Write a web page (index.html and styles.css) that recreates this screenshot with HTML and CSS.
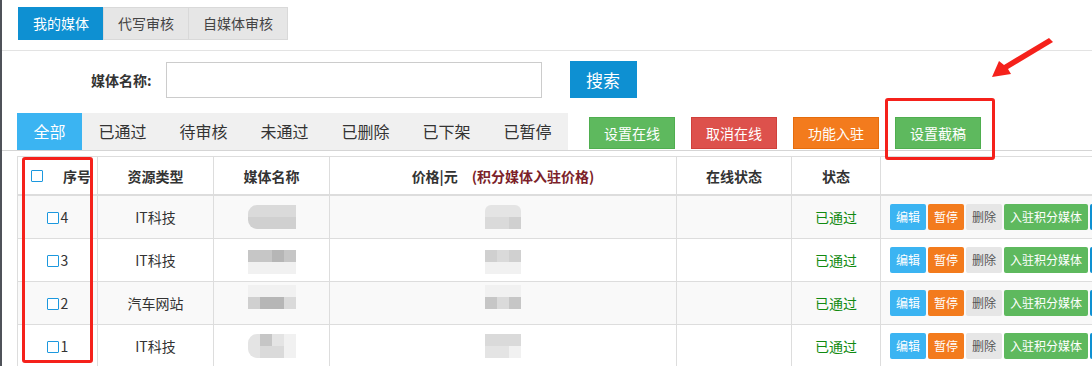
FILE: index.html
```html
<!DOCTYPE html>
<html lang="zh-CN">
<head>
    <meta charset="UTF-8">
    <title>我的媒体</title>
    <link rel="stylesheet" href="styles.css">
</head>
<body>
<div class="page">

    <div class="top-tabs">
        <a class="top-tab active">我的媒体</a>
        <a class="top-tab">代写审核</a>
        <a class="top-tab">自媒体审核</a>
    </div>

    <div class="search-row">
        <label class="search-label">媒体名称:</label>
        <input class="search-input" type="text">
        <button class="btn btn-primary btn-search">搜索</button>
    </div>

    <div class="toolbar">
        <ul class="status-tabs">
            <li class="active">全部</li>
            <li>已通过</li>
            <li>待审核</li>
            <li>未通过</li>
            <li>已删除</li>
            <li>已下架</li>
            <li>已暂停</li>
        </ul>
        <div class="batch-actions">
            <button class="btn btn-success">设置在线</button>
            <button class="btn btn-danger">取消在线</button>
            <button class="btn btn-warning">功能入驻</button>
            <button class="btn btn-success">设置截稿</button>
        </div>
    </div>

    <div class="table-wrap">
        <table class="media-table">
            <colgroup>
                <col class="c-index">
                <col class="c-type">
                <col class="c-name">
                <col class="c-price">
                <col class="c-online">
                <col class="c-state">
                <col class="c-ops">
            </colgroup>
            <thead>
                <tr>
                    <th class="th-index"><span class="cb"></span><span class="th-index-text">序号</span></th>
                    <th>资源类型</th>
                    <th>媒体名称</th>
                    <th>价格|元<span class="price-note">(积分媒体入驻价格)</span></th>
                    <th>在线状态</th>
                    <th>状态</th>
                    <th></th>
                </tr>
            </thead>
            <tbody>
                <tr>
                    <td><span class="cb"></span>4</td>
                    <td>IT科技</td>
                    <td>
                        <div class="blur blur-name round-left">
                            <span class="s2"></span><span class="s2"></span><span class="s2"></span><span class="s2"></span>
                            <span class="s3"></span><span class="s3"></span><span class="s3"></span><span class="s3"></span>
                        </div>
                    </td>
                    <td>
                        <div class="blur blur-price round-top">
                            <span class="s1"></span><span class="s1"></span><span class="s1"></span>
                            <span class="s2"></span><span class="s2"></span><span class="s3"></span>
                        </div>
                    </td>
                    <td></td>
                    <td class="passed">已通过</td>
                    <td class="ops">
                        <button class="op op-edit">编辑</button><button class="op op-pause">暂停</button><button class="op op-del">删除</button><button class="op op-join">入驻积分媒体</button><span class="op op-more"></span>
                    </td>
                </tr>
                <tr>
                    <td><span class="cb"></span>3</td>
                    <td>IT科技</td>
                    <td>
                        <div class="blur blur-name shift-down">
                            <span class="s4"></span><span class="s4"></span><span class="s5"></span><span class="s4"></span>
                            <span class="s0"></span><span class="s0"></span><span class="s0"></span><span class="s0"></span>
                        </div>
                    </td>
                    <td>
                        <div class="blur blur-price shift-down">
                            <span class="s3"></span><span class="s2"></span><span class="s3"></span>
                            <span class="s0"></span><span class="s0"></span><span class="s0"></span>
                        </div>
                    </td>
                    <td></td>
                    <td class="passed">已通过</td>
                    <td class="ops">
                        <button class="op op-edit">编辑</button><button class="op op-pause">暂停</button><button class="op op-del">删除</button><button class="op op-join">入驻积分媒体</button><span class="op op-more"></span>
                    </td>
                </tr>
                <tr>
                    <td><span class="cb"></span>2</td>
                    <td>汽车网站</td>
                    <td>
                        <div class="blur blur-name shift-up">
                            <span class="s0"></span><span class="s0"></span><span class="s0"></span><span class="s0"></span>
                            <span class="s3"></span><span class="s5"></span><span class="s5"></span><span class="s2"></span>
                        </div>
                    </td>
                    <td>
                        <div class="blur blur-price shift-up">
                            <span class="s0"></span><span class="s0"></span><span class="s0"></span>
                            <span class="s4"></span><span class="s2"></span><span class="s4"></span>
                        </div>
                    </td>
                    <td></td>
                    <td class="passed">已通过</td>
                    <td class="ops">
                        <button class="op op-edit">编辑</button><button class="op op-pause">暂停</button><button class="op op-del">删除</button><button class="op op-join">入驻积分媒体</button><span class="op op-more"></span>
                    </td>
                </tr>
                <tr>
                    <td><span class="cb"></span>1</td>
                    <td>IT科技</td>
                    <td>
                        <div class="blur blur-name round-left">
                            <span class="s1"></span><span class="s4"></span><span class="s1"></span><span class="s0"></span>
                            <span class="s1"></span><span class="s2"></span><span class="s2"></span><span class="s0"></span>
                        </div>
                    </td>
                    <td>
                        <div class="blur blur-price">
                            <span class="s2"></span><span class="s2"></span><span class="s2"></span>
                            <span class="s1"></span><span class="s1"></span><span class="s0"></span>
                        </div>
                    </td>
                    <td></td>
                    <td class="passed">已通过</td>
                    <td class="ops">
                        <button class="op op-edit">编辑</button><button class="op op-pause">暂停</button><button class="op op-del">删除</button><button class="op op-join">入驻积分媒体</button><span class="op op-more"></span>
                    </td>
                </tr>
            </tbody>
        </table>
    </div>

    <!-- annotation marks drawn over the screenshot -->
    <div class="mark mark-deadline"></div>
    <div class="mark mark-index"></div>
    <svg class="mark-arrow" viewBox="990 34 66 46" width="66" height="46">
        <polygon points="1049,38 1053,42 1008,69 1011,74 992,77 999,61 1004,65" fill="#f5211b"/>
    </svg>

</div>
</body>
</html>
```

FILE: styles.css
```css
html, body {
    margin: 0;
    padding: 0;
    background-color: #fff;
    overflow: hidden;
}

body {
    font-family: "Noto Sans CJK SC", "Microsoft YaHei", sans-serif;
    font-size: 14px;
    color: #333;
}

.page {
    position: relative;
    min-height: 366px;
    border-left: 2px solid #4f5259;
}

/* top tabs */
.top-tabs {
    display: flex;
    height: 43px;
    padding: 7px 0 0 16px;
    border-bottom: 1px solid #e3e3e3;
}

.top-tab {
    height: 31px;
    line-height: 31px;
    padding: 0 14px;
    border: 1px solid #d9d9d9;
    margin-left: -1px;
    background-color: #e6e6e6;
    color: #444;
    font-size: 14px;
    cursor: pointer;
}

.top-tab.active {
    margin-left: 0;
    background-color: #0e90d2;
    border-color: #0e90d2;
    color: #fff;
}

/* search */
.search-row {
    display: flex;
    align-items: center;
    padding: 10px 0 15px 89px;
}

.search-label {
    font-weight: bold;
    font-size: 14px;
    color: #333;
    margin-right: 14px;
}

.search-input {
    width: 376px;
    height: 36px;
    box-sizing: border-box;
    border: 1px solid #ccc;
    margin: 0;
    padding: 0 8px;
}

.btn {
    border: 1px solid transparent;
    color: #fff;
    font-family: inherit;
    font-size: 14px;
    cursor: pointer;
    box-sizing: border-box;
    padding: 0;
}

.btn-search {
    width: 67px;
    height: 37px;
    margin-left: 28px;
    font-size: 17px;
}

.btn-primary {
    background-color: #0e90d2;
    border-color: #0e90d2;
}

.btn-success {
    background-color: #5eb95e;
    border-color: #4fae4f;
}

.btn-danger {
    background-color: #dd514c;
    border-color: #d0403b;
}

.btn-warning {
    background-color: #f37b1d;
    border-color: #e56c0c;
}

/* status tabs + batch buttons */
.toolbar {
    display: flex;
    align-items: center;
    height: 37px;
    padding-left: 15px;
    border-bottom: 1px solid #d5d5d5;
}

.status-tabs {
    display: flex;
    list-style: none;
    margin: 0;
    padding: 0;
    height: 37px;
    background-color: #f0f0f0;
}

.status-tabs li {
    padding: 0 16.5px;
    line-height: 37px;
    font-size: 16px;
    color: #333;
    cursor: pointer;
}

.status-tabs li.active {
    background-color: #3bb4f2;
    color: #fff;
}

.batch-actions {
    display: flex;
    gap: 16px;
    margin-left: 21px;
    padding-top: 2px;
}

.batch-actions .btn {
    width: 86px;
    height: 32px;
}

/* table */
.table-wrap {
    margin-top: 5px;
    padding-left: 15px;
    overflow: hidden;
}

.media-table {
    border-collapse: collapse;
    table-layout: fixed;
    width: 1123px;
}

.c-index { width: 80px; }
.c-type { width: 116px; }
.c-name { width: 116px; }
.c-price { width: 347px; }
.c-online { width: 115px; }
.c-state { width: 89px; }
.c-ops { width: 260px; }

.media-table th,
.media-table td {
    border: 1px solid #ddd;
    text-align: center;
    padding: 0;
    font-size: 14px;
}

.media-table th {
    height: 37px;
    font-weight: bold;
    color: #333;
    border-bottom: 2px solid #ddd;
}

.media-table th:last-child,
.media-table td:last-child {
    border-right: none;
}

.media-table td {
    height: 42px;
    color: #333;
}

.media-table tbody tr:nth-child(odd) td {
    background-color: #f9f9f9;
}

.media-table th.th-index {
    text-align: left;
    padding-left: 13px;
}

.th-index .cb {
    margin-right: 20px;
    vertical-align: -2px;
}

.th-index-text {
    vertical-align: middle;
}

.price-note {
    color: #7c1f2a;
    margin-left: 14px;
}

.cb {
    display: inline-block;
    width: 12px;
    height: 12px;
    box-sizing: border-box;
    border: 1px solid #1c98de;
    border-radius: 1px;
    background-color: #fff;
    vertical-align: -1px;
    margin-right: 2px;
}

.media-table td.passed {
    color: #118a11;
}

/* row actions */
.media-table td.ops {
    text-align: left;
    padding-left: 9px;
    white-space: nowrap;
    overflow: hidden;
}

.op {
    display: inline-block;
    height: 26px;
    line-height: 26px;
    padding: 0 6px;
    margin-right: 2px;
    border: none;
    border-radius: 2px;
    font-family: inherit;
    font-size: 12px;
    color: #fff;
    vertical-align: middle;
    cursor: pointer;
}

.op-edit { background-color: #3bb4f2; }
.op-pause { background-color: #f37b1d; }
.op-del { background-color: #e6e6e6; color: #555; }
.op-join { background-color: #5eb95e; }
.op-more { background-color: #0e90d2; width: 24px; padding: 0; }

/* mosaic placeholders for hidden values */
.blur {
    display: inline-grid;
    grid-auto-rows: 12px;
    vertical-align: middle;
    overflow: hidden;
}

.blur-name {
    grid-template-columns: repeat(4, 12px);
}

.blur-price {
    grid-template-columns: repeat(3, 12px);
}

.round-left {
    border-radius: 9px 0 0 9px;
}

.round-top {
    border-radius: 6px 6px 0 0;
}

.shift-down {
    position: relative;
    top: 2px;
}

.shift-up {
    position: relative;
    top: -6px;
}

.s0 { background-color: #f1f1f1; }
.s1 { background-color: #e4e4e4; }
.s2 { background-color: #dadada; }
.s3 { background-color: #d0d0d0; }
.s4 { background-color: #c6c6c6; }
.s5 { background-color: #b6b6b6; }

/* red annotation marks */
.mark {
    position: absolute;
    box-sizing: border-box;
    border: 3px solid #f5211b;
    border-radius: 3px;
    pointer-events: none;
}

.mark-deadline {
    left: 883px;
    top: 98px;
    width: 110px;
    height: 62px;
}

.mark-index {
    left: 20px;
    top: 157px;
    width: 71px;
    height: 206px;
}

.mark-arrow {
    position: absolute;
    left: 988px;
    top: 34px;
}
```
